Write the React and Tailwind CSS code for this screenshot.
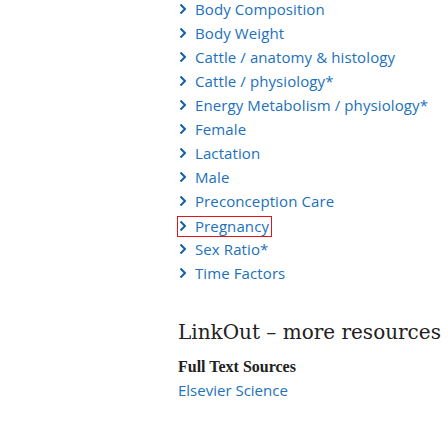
const terms = [
  'Body Composition',
  'Body Weight',
  'Cattle / anatomy & histology',
  'Cattle / physiology*',
  'Energy Metabolism / physiology*',
  'Female',
  'Lactation',
  'Male',
  'Preconception Care',
  'Pregnancy',
  'Sex Ratio*',
  'Time Factors',
];

const Chevron = () => (
  <svg width="8" height="12" viewBox="0 0 8 12" className="shrink-0">
    <path d="M1.5 1.5 L6 6 L1.5 10.5" fill="none" stroke="#145fa8" strokeWidth="2" />
  </svg>
);

export default function App() {
  return (
    <div className="h-[448px] w-[448px] overflow-hidden bg-white pl-[178px]">
      <ul className="-mt-[3px] font-['Open_Sans',sans-serif] text-[15px] tracking-[0.1px] text-[#2171bb]">
        {terms.map((t) => (
          <li key={t} className="flex h-6 items-center">
            <span
              className={
                t === 'Pregnancy'
                  ? 'flex h-[21px] items-center gap-[8px] border border-[#e3141b] pr-[2px] pl-[1px] -ml-[1px] mt-[2px]'
                  : 'flex items-center gap-[8px] pl-[1px]'
              }
            >
              <Chevron />
              <span className="whitespace-nowrap">{t}</span>
            </span>
          </li>
        ))}
      </ul>
      <h2 className="mt-[35px] whitespace-nowrap font-['DejaVu_Serif',serif] text-[20px] leading-6 text-[#212121]">
        LinkOut – more resources
      </h2>
      <h3 className="mt-[13px] font-['Liberation_Serif',serif] text-[16px] font-bold leading-5 text-[#212121]">
        Full Text Sources
      </h3>
      <a className="mt-[3px] block font-['Open_Sans',sans-serif] text-[15px] leading-5 text-[#2171bb]">
        Elsevier Science
      </a>
    </div>
  );
}
